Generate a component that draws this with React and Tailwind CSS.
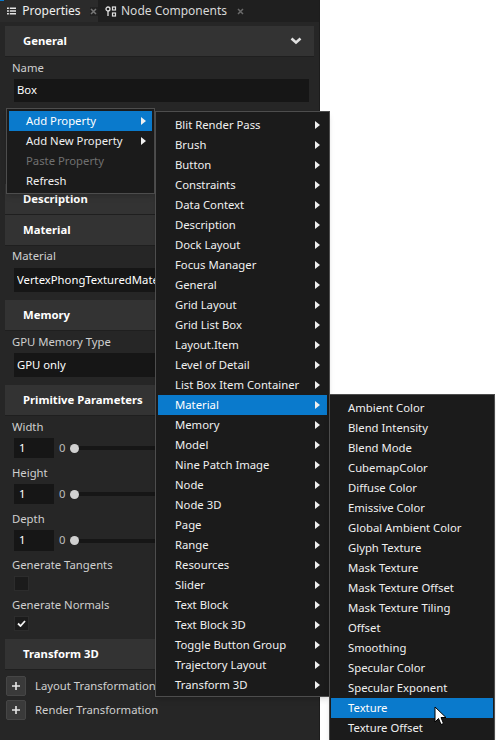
import React from 'react';

const font = { fontFamily: '"Noto Sans", "Open Sans", sans-serif' };

const addPropertyItems = [
    'Blit Render Pass', 'Brush', 'Button', 'Constraints', 'Data Context', 'Description',
    'Dock Layout', 'Focus Manager', 'General', 'Grid Layout', 'Grid List Box', 'Layout.Item',
    'Level of Detail', 'List Box Item Container', 'Material', 'Memory', 'Model',
    'Nine Patch Image', 'Node', 'Node 3D', 'Page', 'Range', 'Resources', 'Slider',
    'Text Block', 'Text Block 3D', 'Toggle Button Group', 'Trajectory Layout', 'Transform 3D',
];

const materialItems = [
    'Ambient Color', 'Blend Intensity', 'Blend Mode', 'CubemapColor', 'Diffuse Color',
    'Emissive Color', 'Global Ambient Color', 'Glyph Texture', 'Mask Texture',
    'Mask Texture Offset', 'Mask Texture Tiling', 'Offset', 'Smoothing', 'Specular Color',
    'Specular Exponent', 'Texture', 'Texture Offset',
];

const Arrow = () => (
    <svg width="5" height="8" viewBox="0 0 5 8" className="shrink-0">
        <path d="M0 0 L5 4 L0 8 Z" fill="#f0f0f0" />
    </svg>
);

const MenuItem = ({ label, active, disabled, arrow, arrowX }) => (
    <div className={`h-[20px] flex items-center pl-[17px] text-[11.3px] ${active ? 'bg-[#0a7acc] text-white' : disabled ? 'text-[#707070]' : 'text-[#f0f0f0]'}`}>
        <span className="flex-1 whitespace-nowrap">{label}</span>
        {arrow && <span className={arrowX}><Arrow /></span>}
    </div>
);

const Header = ({ title, chevron, className = '' }) => (
    <div className={`h-[31px] bg-[#333333] border-b border-[#1f1f1f] flex items-center pl-[18px] pr-[12px] ${className}`}>
        <span className="flex-1 text-white font-bold text-[11.3px]">{title}</span>
        {chevron && (
            <svg width="12" height="8" viewBox="0 0 12 8">
                <path d="M1.5 1.5 L6 5.5 L10.5 1.5" stroke="#e0e0e0" strokeWidth="2.6" fill="none" />
            </svg>
        )}
    </div>
);

const Label = ({ children, className = '' }) => (
    <div className={`h-[16px] leading-[16px] pl-[7px] text-[11.3px] text-[#cfcfcf] ${className}`}>{children}</div>
);

const TextBox = ({ value, h, clip, className = '' }) => (
    <div className={`ml-[9px] mr-[5px] bg-[#161616] flex items-center pl-[3px] text-[11.3px] text-white whitespace-nowrap ${h} ${className}`}>
        <span className={clip ? 'max-w-[138px] overflow-hidden' : ''}>{value}</span>
    </div>
);

const SliderRow = ({ h, className = '' }) => (
    <div className={`flex items-center ml-[9px] mr-[5px] ${h} ${className}`}>
        <div className="w-[40px] h-full bg-[#161616] flex items-center pl-[5px] text-[11.3px] text-white">1</div>
        <span className="ml-[5px] text-[11.3px] text-[#bdbdbd]">0</span>
        <div className="relative flex-1 ml-[6px] h-[4px] bg-[#161616] flex items-center">
            <div className="absolute -left-[1px] w-[9px] h-[9px] rounded-full bg-[#d0d0d0]" />
        </div>
    </div>
);

const Checkbox = ({ checked, className = '' }) => (
    <div className={`ml-[9px] w-[15px] h-[15px] bg-[#1b1b1b] border border-[#2c2c2c] flex items-center justify-center ${className}`}>
        {checked && (
            <svg width="9" height="7" viewBox="0 0 9 7">
                <path d="M1 3.5 L3.5 6 L8 1" stroke="#f2f2f2" strokeWidth="1.8" fill="none" />
            </svg>
        )}
    </div>
);

const PlusRow = ({ label, className = '' }) => (
    <div className={`flex items-center h-[20px] ${className}`}>
        <div className="ml-[1px] w-[20px] h-[20px] bg-[#3a3a3a] border border-[#464646] rounded-[2px] flex items-center justify-center">
            <svg width="8" height="8" viewBox="0 0 8 8">
                <path d="M4 0 V8 M0 4 H8" stroke="#e8e8e8" strokeWidth="1.6" />
            </svg>
        </div>
        <span className="ml-[9px] text-[11.3px] text-[#cfcfcf] whitespace-nowrap">{label}</span>
    </div>
);

export default function App() {
    return (
        <div className="relative w-[496px] h-[740px] bg-white overflow-hidden" style={font}>
            {/* Properties panel */}
            <div className="w-[320px] h-full bg-[#262626] border-r border-[#1c1c1c] flex flex-col">
                <div className="h-[22px] bg-[#1f1f1f] flex items-stretch shrink-0">
                    <div className="w-[98px] bg-[#2b2b2b] flex items-center pl-[7px] relative">
                        <div className="absolute left-0 top-0 w-[4px] h-[1px] bg-[#0a7acc]" />
                        <svg width="10" height="8" viewBox="0 0 10 8">
                            <path d="M0 1 H2 M3 1 H10 M0 4 H2 M3 4 H10 M0 7 H2 M3 7 H10" stroke="#e6e6e6" strokeWidth="1.6" />
                        </svg>
                        <span className="ml-[6px] text-[12px] text-[#f0f0f0]">Properties</span>
                        <span className="ml-[9px] w-[9px] h-[9px] bg-[#222] flex items-center justify-center">
                            <svg width="7" height="7" viewBox="0 0 7 7">
                                <path d="M1 1 L6 6 M6 1 L1 6" stroke="#777" strokeWidth="1.5" />
                            </svg>
                        </span>
                    </div>
                    <div className="flex items-center pl-[7px]">
                        <svg width="12" height="11" viewBox="0 0 12 11">
                            <circle cx="3" cy="3" r="2" stroke="#e0e0e0" strokeWidth="1.3" fill="none" />
                            <path d="M3 5 V10" stroke="#e0e0e0" strokeWidth="1.3" />
                            <rect x="7.5" y="1" width="3" height="3" stroke="#e0e0e0" strokeWidth="1.2" fill="none" />
                            <rect x="7.5" y="7" width="3" height="3" stroke="#e0e0e0" strokeWidth="1.2" fill="none" />
                        </svg>
                        <span className="ml-[4px] text-[12px] text-[#d8d8d8]">Node Components</span>
                        <svg width="7" height="7" viewBox="0 0 7 7" className="ml-[10px]">
                            <path d="M1 1 L6 6 M6 1 L1 6" stroke="#6a6a6a" strokeWidth="1.5" />
                        </svg>
                    </div>
                </div>

                <div className="px-[5px] flex flex-col">
                    <Header title="General" chevron className="mt-[4px]" />
                    <Label className="mt-[3px]">Name</Label>
                    <TextBox value="Box" h="h-[23px]" className="mt-[3px]" />

                    <Header title="Description" className="mt-[82px]" />
                    <Header title="Material" />
                    <Label className="mt-[2px]">Material</Label>
                    <TextBox value="VertexPhongTexturedMaterial" clip h="h-[24px]" className="mt-[4px]" />

                    <Header title="Memory" className="mt-[8px]" />
                    <Label className="mt-[3px]">GPU Memory Type</Label>
                    <TextBox value="GPU only" h="h-[24px]" className="mt-[3px]" />

                    <Header title="Primitive Parameters" className="mt-[8px]" />
                    <Label className="mt-[3px]">Width</Label>
                    <SliderRow h="h-[20px]" className="mt-[3px]" />
                    <Label className="mt-[7px]">Height</Label>
                    <SliderRow h="h-[20px]" className="mt-[3px]" />
                    <Label className="mt-[7px]">Depth</Label>
                    <SliderRow h="h-[21px]" className="mt-[3px]" />
                    <Label className="mt-[6px]">Generate Tangents</Label>
                    <Checkbox className="mt-[3px]" />
                    <Label className="mt-[6px]">Generate Normals</Label>
                    <Checkbox checked className="mt-[3px]" />

                    <Header title="Transform 3D" className="mt-[8px]" />
                    <PlusRow label="Layout Transformation" className="mt-[6px]" />
                    <PlusRow label="Render Transformation" className="mt-[4px]" />
                </div>
            </div>

            {/* Context menu */}
            <div className="absolute left-[6px] top-[108px] w-[149px] bg-[#1b1b1b] border border-[#4d4d4d] p-[2px] shadow-md">
                <MenuItem label="Add Property" active arrow arrowX="pr-[6px]" />
                <MenuItem label="Add New Property" arrow arrowX="pr-[6px]" />
                <MenuItem label="Paste Property" disabled />
                <MenuItem label="Refresh" />
            </div>

            {/* Add Property submenu */}
            <div className="absolute left-[155px] top-[111px] w-[175px] bg-[#1b1b1b] border border-[#4d4d4d] px-[2px] pt-[3px] pb-[1px] shadow-md">
                {addPropertyItems.map((item) => (
                    <MenuItem key={item} label={item} active={item === 'Material'} arrow arrowX="pr-[7px]" />
                ))}
            </div>

            {/* Material submenu */}
            <div className="absolute left-[329px] top-[394px] w-[166px] bg-[#1b1b1b] border border-[#4d4d4d] px-[1px] pt-[3px] pb-[2px] shadow-md">
                {materialItems.map((item) => (
                    <MenuItem key={item} label={item} active={item === 'Texture'} />
                ))}
            </div>

            {/* Mouse cursor */}
            <svg className="absolute left-[434px] top-[706px]" width="14" height="20" viewBox="0 0 14 20">
                <path d="M1 1 L1 16 L4.5 12.5 L7 18.5 L9.5 17.5 L7 11.5 L12 11.5 Z" fill="white" stroke="black" strokeWidth="1" />
            </svg>
        </div>
    );
}
